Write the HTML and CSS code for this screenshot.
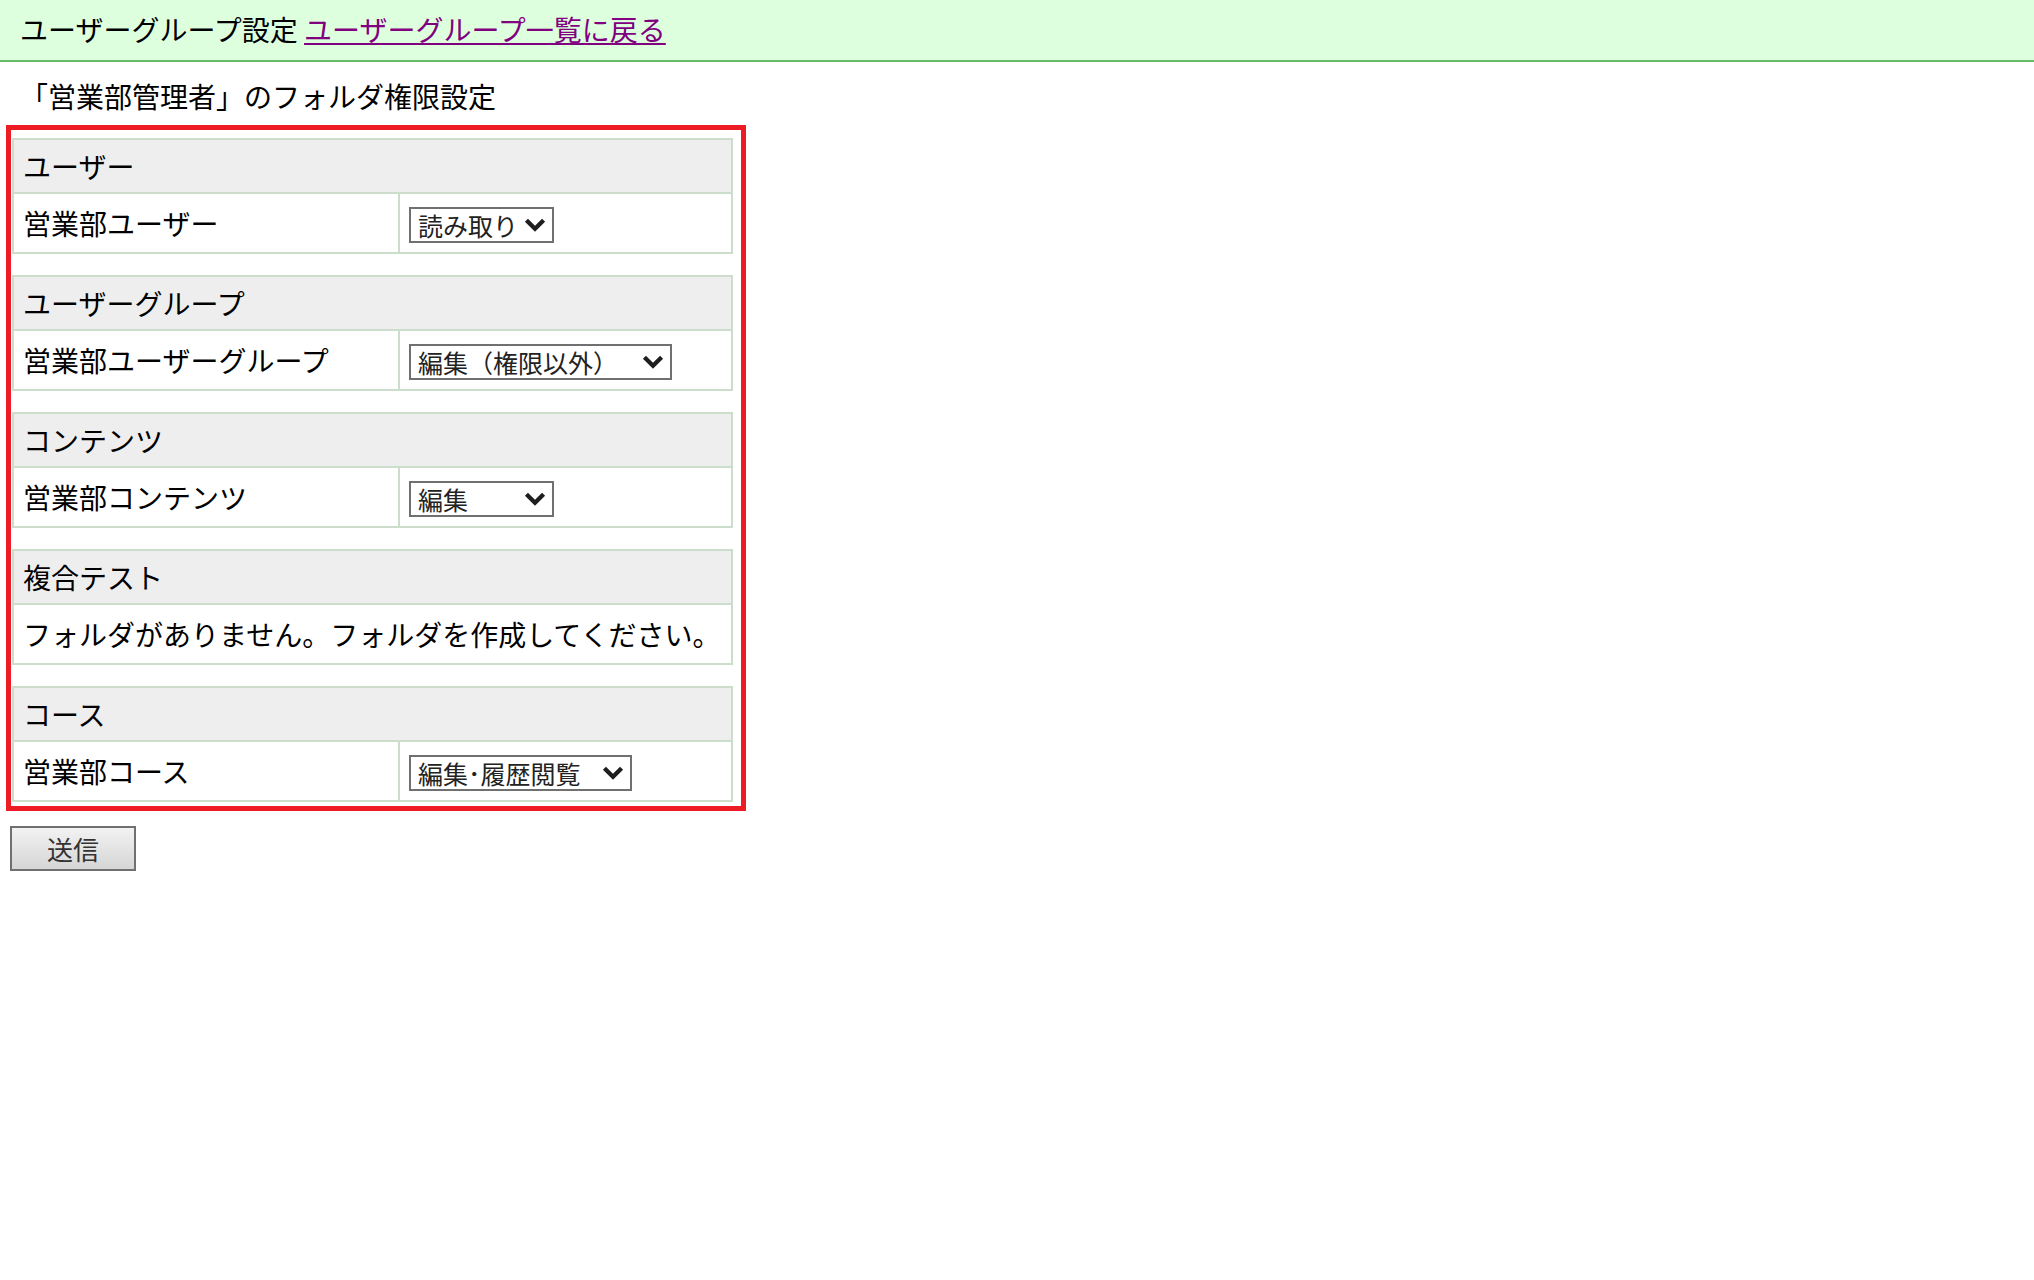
FILE: index.html
```html
<!DOCTYPE html>
<html lang="ja">
<head>
    <meta charset="UTF-8">
    <title>ユーザーグループ設定</title>
    <link rel="stylesheet" href="styles.css">
</head>
<body>
    <div class="topbar">
        ユーザーグループ設定 <a href="#">ユーザーグループ一覧に戻る</a>
    </div>
    <p class="title">「営業部管理者」のフォルダ権限設定</p>

    <form>
        <div class="frame">
            <table class="perm">
                <tr><th colspan="2">ユーザー</th></tr>
                <tr>
                    <td class="name">営業部ユーザー</td>
                    <td class="val">
                        <span class="sel w-s">
                            <select><option>読み取り</option><option>編集</option></select>
                            <svg viewBox="0 0 20 14"><path d="M2 3 L10 11 L18 3"/></svg>
                        </span>
                    </td>
                </tr>
            </table>

            <table class="perm">
                <tr><th colspan="2">ユーザーグループ</th></tr>
                <tr>
                    <td class="name">営業部ユーザーグループ</td>
                    <td class="val">
                        <span class="sel w-l">
                            <select><option>編集（権限以外）</option><option>読み取り</option></select>
                            <svg viewBox="0 0 20 14"><path d="M2 3 L10 11 L18 3"/></svg>
                        </span>
                    </td>
                </tr>
            </table>

            <table class="perm">
                <tr><th colspan="2">コンテンツ</th></tr>
                <tr>
                    <td class="name">営業部コンテンツ</td>
                    <td class="val">
                        <span class="sel w-s">
                            <select><option>編集</option><option>読み取り</option></select>
                            <svg viewBox="0 0 20 14"><path d="M2 3 L10 11 L18 3"/></svg>
                        </span>
                    </td>
                </tr>
            </table>

            <table class="perm">
                <tr><th colspan="2">複合テスト</th></tr>
                <tr><td colspan="2">フォルダがありません。フォルダを作成してください。</td></tr>
            </table>

            <table class="perm last">
                <tr><th colspan="2">コース</th></tr>
                <tr>
                    <td class="name">営業部コース</td>
                    <td class="val">
                        <span class="sel w-m">
                            <select><option>編集･履歴閲覧</option><option>読み取り</option></select>
                            <svg viewBox="0 0 20 14"><path d="M2 3 L10 11 L18 3"/></svg>
                        </span>
                    </td>
                </tr>
            </table>
        </div>
        <button type="button" class="send">送信</button>
    </form>
</body>
</html>
```

FILE: styles.css
```css
*{
    box-sizing: border-box;
}
body{
    margin: 0;
    font-family: "Noto Sans CJK JP", "Noto Sans", sans-serif;
    font-size: 28px;
    color: #000;
    background: #fff;
}
.topbar{
    height: 62px;
    line-height: 58px;
    padding-left: 20px;
    background-color: #ddffdd;
    border-bottom: 2px solid #66bb66;
}
.topbar a{
    color: #800080;
}
.title{
    margin: 14px 0 9px 0;
    padding-left: 20px;
    line-height: 40px;
}
.frame{
    width: 740px;
    margin-left: 6px;
    border: 5px solid #ed1c24;
    padding: 8px 8px 4px 1px;
}
.perm{
    width: 100%;
    border-collapse: collapse;
    margin-bottom: 21px;
}
.perm.last{
    margin-bottom: 0;
}
.perm th,
.perm td{
    border: 2px solid #ccddcc;
    padding: 0 0 0 9px;
    text-align: left;
    font-weight: normal;
    line-height: 34px;
}
.perm th{
    background-color: #eeeeee;
    height: 54px;
}
.perm td{
    height: 60px;
}
.perm td.name{
    width: 386px;
}
.sel{
    position: relative;
    display: inline-block;
    vertical-align: middle;
}
.sel select{
    appearance: none;
    -webkit-appearance: none;
    width: 100%;
    height: 36px;
    border: 2px solid #707070;
    border-radius: 0;
    background: #fff;
    padding: 0 0 0 7px;
    font-family: "Noto Sans CJK JP", sans-serif;
    font-size: 25px;
    line-height: 32px;
    color: #222;
}
.sel svg{
    position: absolute;
    right: 8px;
    top: 10px;
    width: 22px;
    height: 15px;
    fill: none;
    stroke: #1e1e1e;
    stroke-width: 4;
    pointer-events: none;
}
.w-s{
    width: 145px;
}
.w-m{
    width: 223px;
}
.w-l{
    width: 263px;
}
.send{
    margin: 15px 0 0 10px;
    width: 126px;
    height: 45px;
    border: 2px solid #707070;
    border-radius: 0;
    background: linear-gradient(#f2f2f2, #d6d6d6);
    font-family: "Noto Sans CJK JP", sans-serif;
    font-size: 26px;
    color: #333;
    padding: 0;
    line-height: 38px;
}
```
